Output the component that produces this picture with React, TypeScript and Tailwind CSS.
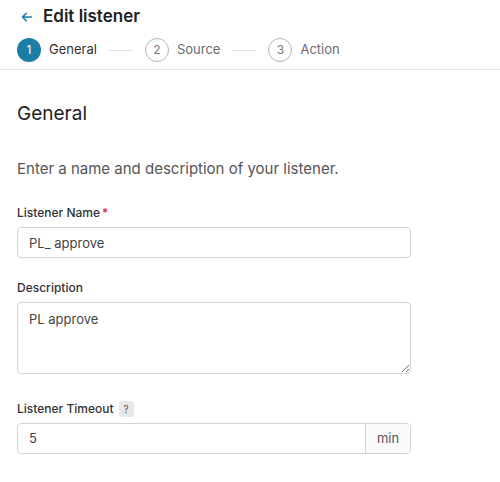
import * as React from "react"

const FONT = { fontFamily: "Inter, 'Noto Sans', sans-serif" }

function Step({ n, label, active }: { n: number; label: string; active?: boolean }) {
  return (
    <div className="flex items-center gap-2">
      <div
        className={`w-6 h-6 rounded-full flex items-center justify-center text-[12px] ${active ? "bg-[#1b7ea6] text-white" : "border border-[#b5b5b5] text-[#777]"}`}
      >
        {n}
      </div>
      <span className={`text-[13px] ${active ? "text-[#333]" : "text-[#6b6b6b]"}`}>{label}</span>
    </div>
  )
}

export default function App() {
  return (
    <div className="w-[500px] h-[482px] bg-white overflow-hidden" style={FONT}>
      {/* Header */}
      <div className="border-b border-[#e4e4e4] pl-[17px] pt-[6px] pb-[7px]">
        <div className="flex items-center gap-[10px] pl-[4px] h-[22px]">
          <svg width="12" height="12" viewBox="0 0 12 12" fill="none" stroke="#1b7ea6" strokeWidth="1.6" strokeLinecap="round" strokeLinejoin="round">
            <path d="M10.5 6H1.5M5.2 2.3L1.5 6l3.7 3.7" />
          </svg>
          <h1 className="text-[17px] font-semibold text-[#222]">Edit listener</h1>
        </div>
        <div className="flex items-center mt-[10px] h-[24px]">
          <Step n={1} label="General" active />
          <div className="w-[24px] h-px bg-[#e2e2e2] mx-[12px]" />
          <Step n={2} label="Source" />
          <div className="w-[24px] h-px bg-[#e2e2e2] mx-[12px]" />
          <Step n={3} label="Action" />
        </div>
      </div>

      {/* Form */}
      <div className="px-[17px] w-[428px]">
        <h2 className="text-[19px] text-[#222] mt-[31px] leading-[26px]">General</h2>
        <p className="text-[15px] text-[#555] mt-[31px] leading-[22px]">Enter a name and description of your listener.</p>

        <div className="mt-[25px]">
          <label className="block text-[12px] font-medium text-[#333] leading-[16px]">
            Listener Name<span className="text-[#d6245a] ml-[2px]">*</span>
          </label>
          <input
            defaultValue="PL_ approve"
            className="mt-[6px] w-[394px] h-[31px] border border-[#d4d4d4] rounded-[4px] px-[11px] text-[13px] text-[#444] outline-none"
          />
        </div>

        <div className="mt-[22px]">
          <label className="block text-[12px] font-medium text-[#333] leading-[16px]">Description</label>
          <textarea
            defaultValue="PL approve"
            className="mt-[6px] block w-[394px] h-[72px] border border-[#d4d4d4] rounded-[4px] px-[11px] py-[7px] text-[13px] text-[#444] outline-none resize-y"
          />
        </div>

        <div className="mt-[27px]">
          <div className="flex items-center gap-[5px] h-[16px]">
            <label className="text-[12px] font-medium text-[#333] leading-[16px]">Listener Timeout</label>
            <span className="w-[15px] h-[16px] rounded-[3px] bg-[#e8e8e8] text-[10px] text-[#555] flex items-center justify-center">?</span>
          </div>
          <div className="mt-[6px] w-[394px] h-[31px] flex border border-[#d4d4d4] rounded-[4px] overflow-hidden">
            <input defaultValue="5" className="flex-1 min-w-0 px-[11px] text-[13px] text-[#444] outline-none" />
            <div className="w-[45px] border-l border-[#d4d4d4] bg-[#fafafa] flex items-center justify-center text-[13px] text-[#555]">min</div>
          </div>
        </div>
      </div>
    </div>
  )
}
